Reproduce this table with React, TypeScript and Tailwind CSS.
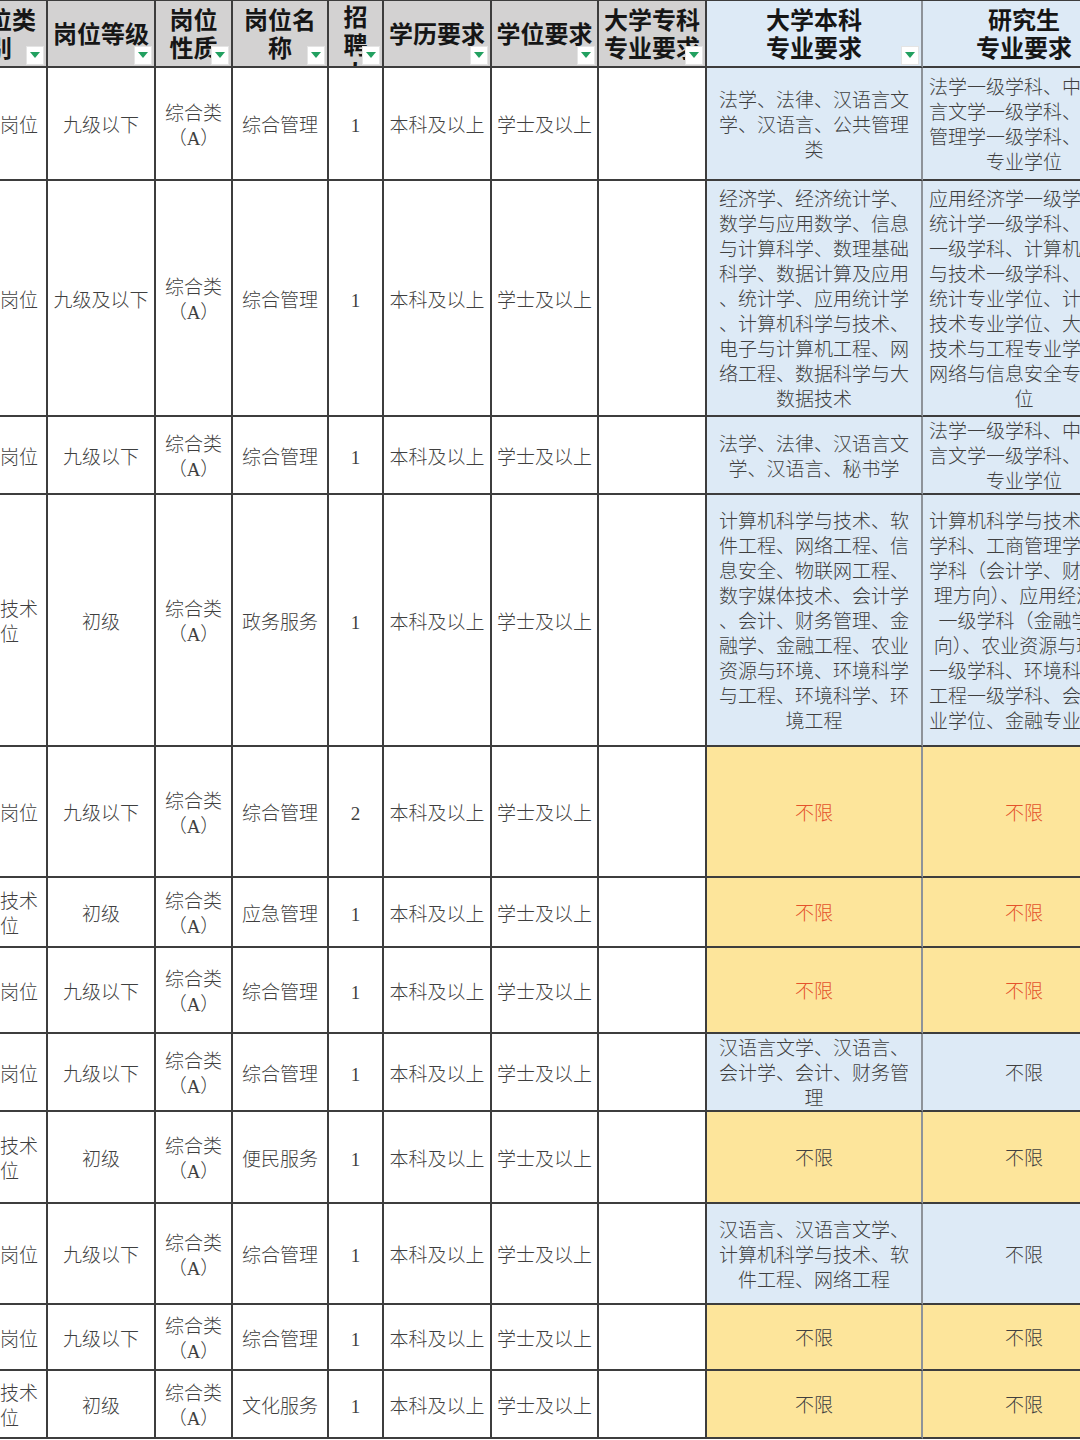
import React from "react";

type Req = { text: string; bg: "blue" | "yellow"; red?: boolean };

type Row = {
  cat: string;
  level: string;
  kind: string;
  name: string;
  num: string;
  bk: Req;
  yjs: Req;
};

const ANY_RED: Req = { text: "不限", bg: "yellow", red: true };
const ANY: Req = { text: "不限", bg: "yellow" };
const ANY_BLUE: Req = { text: "不限", bg: "blue" };

const MGMT = "管理岗位";
const TECH = "专业技术\n岗位";

const rows: Row[] = [
  {
    cat: MGMT, level: "九级以下", kind: "综合类\n（A）", name: "综合管理", num: "1",
    bk: { text: "法学、法律、汉语言文\n学、汉语言、公共管理\n类", bg: "blue" },
    yjs: { text: "法学一级学科、中国语\n言文学一级学科、公共\n管理学一级学科、法律\n专业学位", bg: "blue" },
  },
  {
    cat: MGMT, level: "九级及以下", kind: "综合类\n（A）", name: "综合管理", num: "1",
    bk: {
      text: "经济学、经济统计学、\n数学与应用数学、信息\n与计算科学、数理基础\n科学、数据计算及应用\n、统计学、应用统计学\n、计算机科学与技术、\n电子与计算机工程、网\n络工程、数据科学与大\n数据技术",
      bg: "blue",
    },
    yjs: {
      text: "应用经济学一级学科、\n统计学一级学科、数学\n一级学科、计算机科学\n与技术一级学科、应用\n统计专业学位、计算机\n技术专业学位、大数据\n技术与工程专业学位、\n网络与信息安全专业学\n位",
      bg: "blue",
    },
  },
  {
    cat: MGMT, level: "九级以下", kind: "综合类\n（A）", name: "综合管理", num: "1",
    bk: { text: "法学、法律、汉语言文\n学、汉语言、秘书学", bg: "blue" },
    yjs: { text: "法学一级学科、中国语\n言文学一级学科、法律\n专业学位", bg: "blue" },
  },
  {
    cat: TECH, level: "初级", kind: "综合类\n（A）", name: "政务服务", num: "1",
    bk: {
      text: "计算机科学与技术、软\n件工程、网络工程、信\n息安全、物联网工程、\n数字媒体技术、会计学\n、会计、财务管理、金\n融学、金融工程、农业\n资源与环境、环境科学\n与工程、环境科学、环\n境工程",
      bg: "blue",
    },
    yjs: {
      text: "计算机科学与技术一级\n学科、工商管理学一级\n学科（会计学、财务管\n理方向）、应用经济学\n一级学科（金融学方\n向）、农业资源与环境\n一级学科、环境科学与\n工程一级学科、会计专\n业学位、金融专业学位",
      bg: "blue",
    },
  },
  { cat: MGMT, level: "九级以下", kind: "综合类\n（A）", name: "综合管理", num: "2", bk: ANY_RED, yjs: ANY_RED },
  { cat: TECH, level: "初级", kind: "综合类\n（A）", name: "应急管理", num: "1", bk: ANY_RED, yjs: ANY_RED },
  { cat: MGMT, level: "九级以下", kind: "综合类\n（A）", name: "综合管理", num: "1", bk: ANY_RED, yjs: ANY_RED },
  {
    cat: MGMT, level: "九级以下", kind: "综合类\n（A）", name: "综合管理", num: "1",
    bk: { text: "汉语言文学、汉语言、\n会计学、会计、财务管\n理", bg: "blue" },
    yjs: ANY_BLUE,
  },
  { cat: TECH, level: "初级", kind: "综合类\n（A）", name: "便民服务", num: "1", bk: ANY, yjs: ANY },
  {
    cat: MGMT, level: "九级以下", kind: "综合类\n（A）", name: "综合管理", num: "1",
    bk: { text: "汉语言、汉语言文学、\n计算机科学与技术、软\n件工程、网络工程", bg: "blue" },
    yjs: ANY_BLUE,
  },
  { cat: MGMT, level: "九级以下", kind: "综合类\n（A）", name: "综合管理", num: "1", bk: ANY, yjs: ANY },
  { cat: TECH, level: "初级", kind: "综合类\n（A）", name: "文化服务", num: "1", bk: ANY, yjs: ANY },
];

const headers = [
  { text: "岗位类\n别", bg: "gray" },
  { text: "岗位等级", bg: "gray" },
  { text: "岗位\n性质", bg: "gray" },
  { text: "岗位名\n称", bg: "gray" },
  { text: "招\n聘\n人\n数", bg: "gray", top: true },
  { text: "学历要求", bg: "gray" },
  { text: "学位要求", bg: "gray" },
  { text: "大学专科\n专业要求", bg: "gray" },
  { text: "大学本科\n专业要求", bg: "blue" },
  { text: "研究生\n专业要求", bg: "blue", last: true },
];

// excel autofilter arrow
const FilterButton = () => (
  <span className="absolute right-[2px] bottom-[1px] flex h-[19px] w-[18px] items-center justify-center border border-[#e4e4e4] bg-white">
    <svg width="10" height="7" viewBox="0 0 10 7">
      <polygon points="0,0 10,0 5,6" fill="#22a060" />
    </svg>
  </span>
);

const cellBase = "relative flex items-center justify-center overflow-hidden border-r-2 border-b-2 border-[#3d3d3d] text-center";

const Body = ({ children }: { children: React.ReactNode }) => (
  <div className={`${cellBase} bg-white pt-[4px] text-[19px] leading-[25px] font-light text-[#3f3f3f] whitespace-pre`}>
    <span>{children}</span>
  </div>
);

const ReqCell = ({ req, last }: { req: Req; last?: boolean }) => (
  <div
    className={`${cellBase} pt-[3px] text-[19px] leading-[25px] font-light whitespace-pre ${
      req.bg === "blue" ? "bg-[#ddeaf6]" : "bg-[#fde59b]"
    } ${req.red ? "text-[#e4532b]" : "text-[#3f3f3f]"} ${last ? "" : "border-r-[#8e9399]"}`}
  >
    <span className="block w-full">{req.text}</span>
  </div>
);

export default function App() {
  return (
    <div className="h-[1440px] w-[1080px] overflow-hidden bg-white [font-family:'Liberation_Serif','Noto_Sans_CJK_SC',serif]">
      <div className="ml-[-46px] mt-[-1px] grid w-fit grid-cols-[94px_108px_77px_96px_55px_108px_107px_108px_216px_204px] grid-rows-[67px_113px_236px_78px_252px_131px_70px_86px_78px_92px_101px_66px_68px] border-t-2 border-[#3d3d3d]">
        {headers.map((h, i) => (
          <div
            key={`h${i}`}
            className={`${cellBase} whitespace-pre text-[24px] leading-[28px] font-bold text-[#161616] ${
              h.bg === "blue" ? "bg-[#ddeaf6]" : "bg-[#d3d2d2]"
            } ${h.top ? "items-start pt-[3px]" : "pt-[2px]"} ${i === 8 ? "border-r-[#8e9399]" : ""}`}
          >
            <span>{h.text}</span>
            {!h.last && <FilterButton />}
          </div>
        ))}
        {rows.map((r, i) => (
          <React.Fragment key={i}>
            <Body>{r.cat}</Body>
            <Body>{r.level}</Body>
            <Body>{r.kind}</Body>
            <Body>{r.name}</Body>
            <Body>{r.num}</Body>
            <Body>本科及以上</Body>
            <Body>学士及以上</Body>
            <Body>{""}</Body>
            <ReqCell req={r.bk} />
            <ReqCell req={r.yjs} last />
          </React.Fragment>
        ))}
      </div>
    </div>
  );
}
